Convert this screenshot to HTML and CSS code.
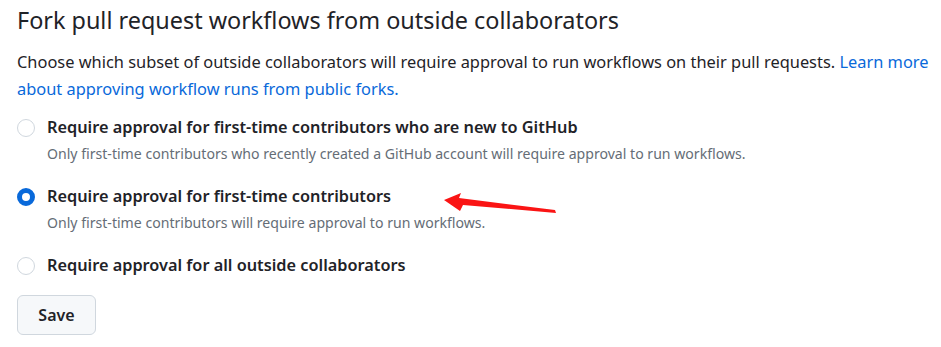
FILE: index.html
```html
<!DOCTYPE html>
<html lang="en">
<head>
    <meta charset="UTF-8">
    <meta name="viewport" content="width=device-width, initial-scale=1.0">
    <title>Fork pull request workflows</title>
    <link rel="stylesheet" href="styles.css">
</head>
<body>
    <div class="settings">
        <h2 class="subhead">Fork pull request workflows from outside collaborators</h2>
        <p class="desc">Choose which subset of outside collaborators will require approval to run workflows on their pull requests. <a href="#">Learn more about approving workflow runs from public forks.</a></p>

        <form class="options">
            <label class="choice">
                <input type="radio" name="approval" class="radio">
                <span class="choice-text">
                    <span class="choice-title">Require approval for first-time contributors who are new to GitHub</span>
                    <span class="choice-note">Only first-time contributors who recently created a GitHub account will require approval to run workflows.</span>
                </span>
            </label>
            <label class="choice">
                <input type="radio" name="approval" class="radio" checked>
                <span class="choice-text">
                    <span class="choice-title">Require approval for first-time contributors</span>
                    <span class="choice-note">Only first-time contributors will require approval to run workflows.</span>
                </span>
            </label>
            <label class="choice">
                <input type="radio" name="approval" class="radio">
                <span class="choice-text">
                    <span class="choice-title">Require approval for all outside collaborators</span>
                </span>
            </label>
            <button type="button" class="btn">Save</button>
        </form>
    </div>

    <!-- red arrow drawn on top of the screenshot -->
    <svg class="arrow" width="941" height="347" viewBox="0 0 941 347">
        <polygon points="444,200 461,193 459,198 555,210 556,213 463,205 460,211" fill="#fa1414"/>
    </svg>
</body>
</html>
```

FILE: styles.css
```css
body {
    margin: 0;
    background: #fff;
    color: #1f2328;
    font-family: "Noto Sans", "Open Sans", sans-serif;
}
.settings {
    padding: 0 6px 0 17px;
}
.subhead {
    margin: 0;
    padding-top: 3px;
    font-size: 23.4px;
    font-weight: 400;
    line-height: 34px;
}
.desc {
    margin: 11px 0 0;
    font-size: 16.4px;
    line-height: 27px;
}
.desc a {
    color: #0969da;
    text-decoration: none;
}
.options {
    margin-top: 12px;
}
.choice {
    display: flex;
    align-items: flex-start;
    gap: 12px;
    margin-bottom: 16px;
}
.radio {
    appearance: none;
    flex: none;
    width: 18px;
    height: 18px;
    margin: 5px 0 0;
    border: 1px solid #d0d7de;
    border-radius: 50%;
    background: #fff;
}
.radio:checked {
    border: 5px solid #0969da;
}
.choice-text {
    display: flex;
    flex-direction: column;
}
.choice-title {
    font-size: 16.3px;
    font-weight: 600;
    line-height: 27px;
}
.choice-note {
    font-size: 14.1px;
    line-height: 26px;
    color: #656d76;
}
.btn {
    display: block;
    margin-top: 15px;
    width: 79px;
    height: 40px;
    border: 1px solid #d0d7de;
    border-radius: 6px;
    background: #f6f8fa;
    color: #1f2328;
    font-family: inherit;
    font-size: 16px;
    font-weight: 600;
}
.arrow {
    position: absolute;
    left: 0;
    top: 0;
    pointer-events: none;
}
```
